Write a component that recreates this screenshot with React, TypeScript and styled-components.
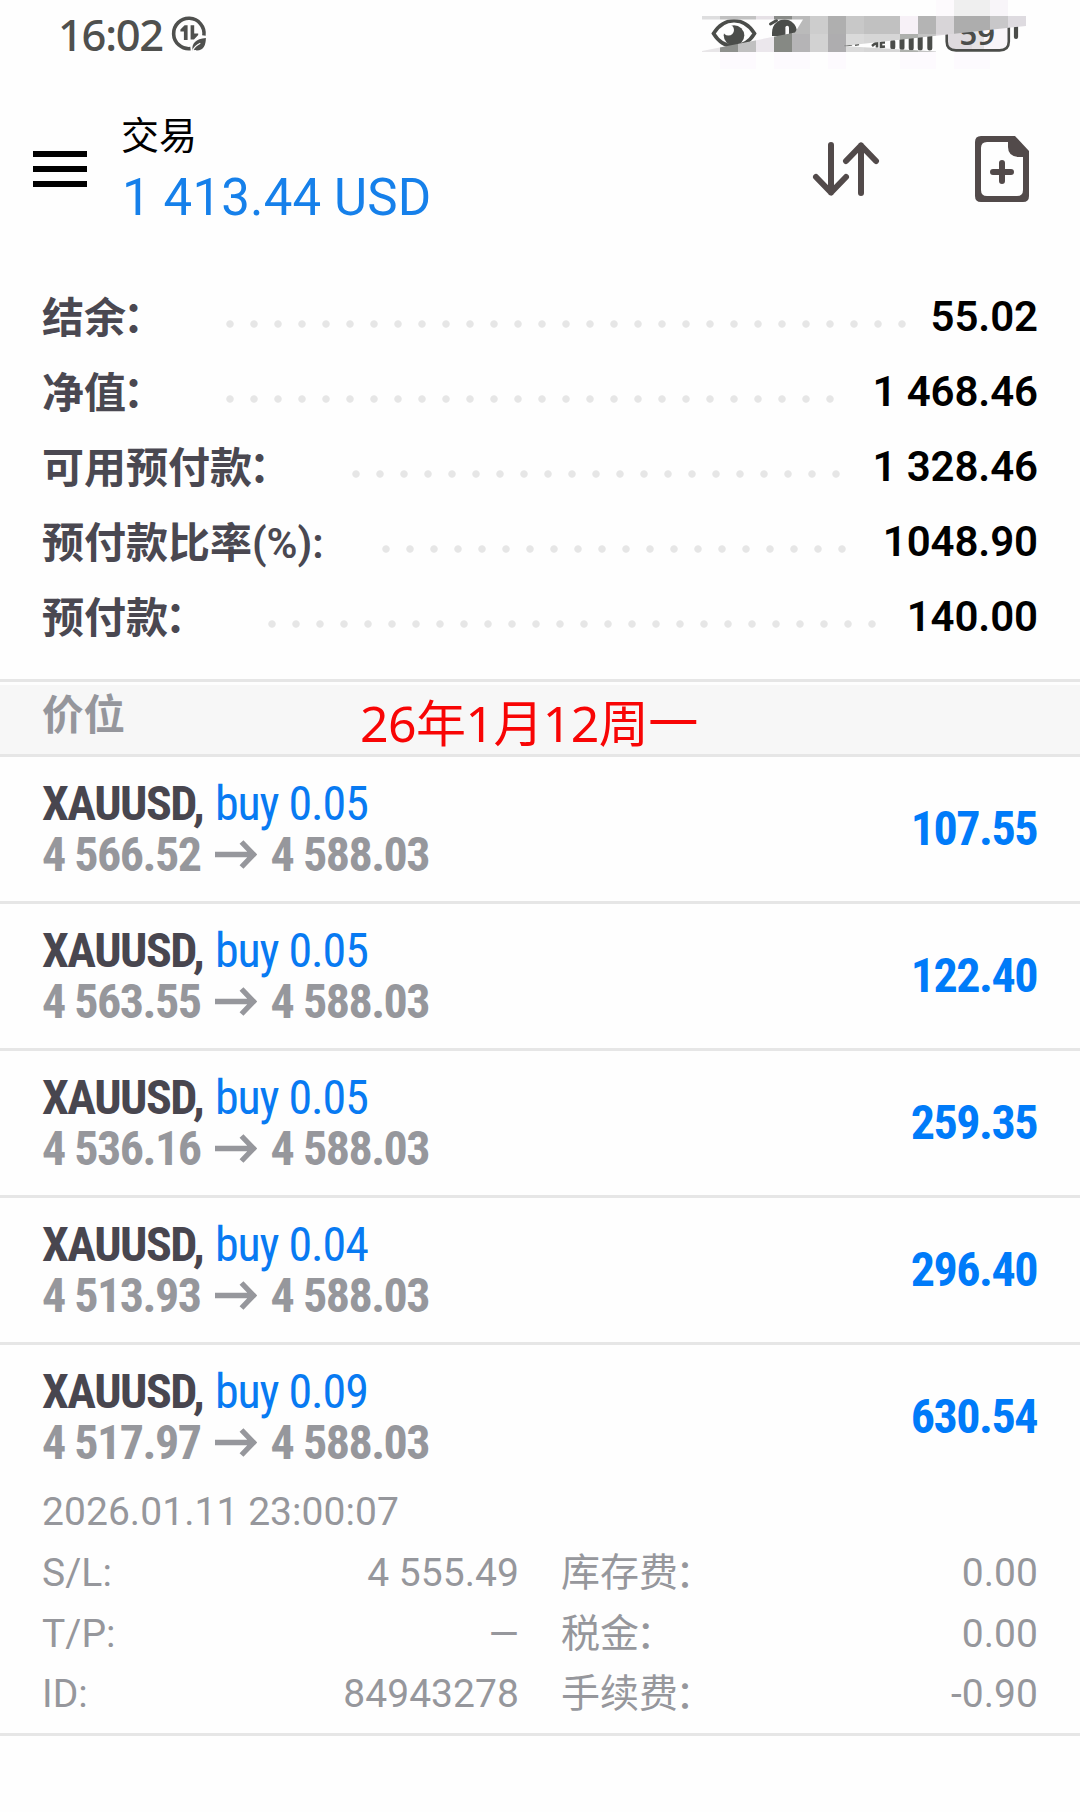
import React from 'react';
import styled, { createGlobalStyle } from 'styled-components';

const SANS = 'Roboto, "Noto Sans CJK SC", sans-serif';
const CONDENSED = '"Roboto Condensed", Roboto, "Noto Sans CJK SC", sans-serif';

const GlobalStyle = createGlobalStyle`
  * { box-sizing: border-box; }
  body {
    margin: 0;
    background: #fefefe;
    font-family: ${SANS};
  }
`;

const Screen = styled.div`
  width: 1080px;
  height: 1812px;
  display: flex;
  flex-direction: column;
  overflow: hidden;
  background: #fefefe;
`;

/* ---------- status bar ---------- */

const StatusBar = styled.div`
  height: 72px;
  padding: 0 54px 0 58px;
  display: flex;
  justify-content: space-between;
  flex: none;
`;

const ClockGroup = styled.div`
  display: flex;
  align-items: center;
  gap: 7px;
  height: 68px;
`;

const Clock = styled.span`
  width: 106px;
  padding-bottom: 1px;
  font: 500 43.5px/60px 'Noto Sans', sans-serif;
  letter-spacing: -1.3px;
  color: #4f504e;
  white-space: nowrap;
`;

/* ---------- header ---------- */

const Header = styled.header`
  height: 207px;
  padding: 30px 51px 0 33px;
  display: flex;
  flex: none;
`;

const MenuButton = styled.button`
  width: 54px;
  height: 36px;
  margin: 49px 34px 0 0;
  padding: 0;
  border: 0;
  background: none;
  display: flex;
  flex-direction: column;
  justify-content: space-between;
`;

const MenuBar = styled.span`
  width: 54px;
  height: 6px;
  background: #000;
`;

const Titles = styled.div`
  flex: 1;
  padding-top: 2px;
  display: flex;
  flex-direction: column;
`;

const Title = styled.h1`
  margin: 0;
  font-weight: 400;
  font-size: 38px;
  line-height: 64px;
  color: #000;
`;

const Equity = styled.div`
  padding-left: 1px;
  font-size: 51px;
  letter-spacing: 0.15px;
  line-height: 60px;
  color: #1680ea;
`;

const Actions = styled.div`
  display: flex;
  align-items: center;
  height: 66px;
  gap: 95px;
  margin-top: 34px;
`;

/* ---------- account summary ---------- */

const Summary = styled.section`
  padding: 0 42px 25px;
  flex: none;
`;

const SummaryRow = styled.div`
  height: 75px;
  display: flex;
  align-items: center;
  font-size: 42px;
`;

const SummaryLabel = styled.span`
  margin-right: 58px;
  padding-bottom: 5px;
  font-weight: 600;
  color: #4a4851;
  white-space: nowrap;
`;

/* full-width colon nudged against the glyph before it */
const WideColon = styled.span<{ $pull: number; $lift: number }>`
  display: inline-block;
  line-height: 1;
  margin: 0 ${(p) => p.$pull}px 0 ${(p) => -p.$pull}px;
  vertical-align: ${(p) => p.$lift}px;
`;

const Leader = styled.span<{ $dots: number }>`
  width: ${(p) => p.$dots * 24}px;
  height: 8px;
  margin: 14px auto 0 -8px;
  background: radial-gradient(circle at 12px 4px, #e6e6e6 3.3px, transparent 4.1px) 0 0 / 24px 8px repeat-x;
`;

const SummaryValue = styled.span`
  font-weight: 600;
  letter-spacing: -0.1px;
  color: #000;
  white-space: nowrap;
`;

/* ---------- positions ---------- */

const SectionBar = styled.div`
  height: 78px;
  flex: none;
  padding-top: 3px;
  border-top: 3px solid #e6e6e6;
  border-bottom: 3px solid #e6e6e6;
`;

const SectionFill = styled.div`
  height: 69px;
  padding-left: 42px;
  display: flex;
  background: #f7f7f7;
`;

const SectionTitle = styled.span`
  width: 318px;
  font-size: 41.5px;
  font-weight: 600;
  line-height: 62px;
  color: #95969c;
`;

const DateNote = styled.span`
  font: 400 50px/77px 'Noto Sans', 'Noto Sans CJK SC', sans-serif;
  letter-spacing: -0.6px;
  color: #f80505;
  white-space: nowrap;
`;

const Position = styled.article`
  flex: none;
  border-bottom: 3px solid #e6e6e6;
`;

const Deal = styled.div`
  height: 144px;
  padding: 0 42px;
  display: flex;
  align-items: center;
  justify-content: space-between;
  font-family: ${CONDENSED};
  font-size: 48px;
  font-weight: 700;
  letter-spacing: -1.5px;
  white-space: nowrap;
`;

const DealLines = styled.div`
  line-height: 51px;
`;

const Symbol = styled.div`
  color: #48464f;
`;

const Volume = styled.span`
  margin-left: 2px;
  font-weight: 400;
  letter-spacing: -1.1px;
  color: #087af2;
`;

const Prices = styled.div`
  display: flex;
  align-items: center;
  gap: 14px;
  color: #96979c;
`;

const Profit = styled.div`
  margin-right: 1px;
  padding-bottom: 2px;
  color: #007bf9;
`;

const Details = styled.div`
  margin-top: -7px;
  padding: 0 42px 8px;
  font-size: 39px;
  letter-spacing: 0.05px;
  line-height: 60.75px;
  color: #96979c;
`;

const DetailGrid = styled.div`
  display: grid;
  grid-template-columns: 1fr 1fr;
  column-gap: 42px;
`;

const DetailItem = styled.div`
  height: 60.75px;
  display: flex;
  justify-content: space-between;
`;

/* ---------- icons ---------- */

const DataSaverIcon = () => (
  <svg width="36" height="36" viewBox="171 16 36 36" fill="none">
    <path d="M203.9 35.5A15.2 15.2 0 1 0 190.5 48.6" stroke="#4f504e" strokeWidth="3.6" />
    <path d="M187.6 25.2V40H183.9V31.6H180.4V29.6L184.6 25.2Z" fill="#4f504e" />
    <path d="M190.6 25.2H194.2V33.6H198.2V35L194 39.6H190.6Z" fill="#4f504e" />
    <path d="M205.9 38C205.8 45.5 203.4 50.4 197 50.4C195.2 50.4 194.2 50 193.8 49.5L192.6 50.6C191.4 43.4 195.8 38.8 205.9 38Z" fill="#4f504e" />
    <path d="M192.6 50.6C194 47.5 196.5 45 200.3 43.2" stroke="#fefefe" strokeWidth="1.2" />
  </svg>
);

const CELL = 18;
const MOSAIC: string[][] = [
  ['#dededf', '#c0c0c0', '#c2c2c2', '#e6e1e6', '#8a8c89', '#bababa', '#cdcdcd', '#afafaf', '#c8c8c8', '#c1c1c1', '#c1c1c1', '#f7f1f7', '#b4b4b4', '#d8d5d8', '#adadad', '#adadad', '#c8c7c9', '#dedbe0'],
  ['#e8e6e8', '#8e908d', '#c0c0c0', '#ebe7ec', '#868984', '#b5b4b6', '#d2d2d2', '#aeadaf', '#dadada', '#d6d6d6', '#d6d6d6', '#aeb0ad', '#c4c4c4', '#dedade', '#e0e0e0', '#e0e0e0', '#f5f2f5', '#f5f2f5'],
];
const HAZE = [
  [720, 36], [774, 36], [828, 18], [900, 36], [954, 36],
];

const StatusIcons = () => (
  <svg width="326" height="72" viewBox="700 0 326 72" fill="none">
    <defs>
      <clipPath id="mosaic">
        <path d="M702 16H1026V26L843 46L936 51.5V52H702V51L795 32.5L803 19.5H702Z" />
      </clipPath>
    </defs>
    <path d="M936 0h18v16h-18z" fill="#fdfafd" />
    <path d="M954 0h36v16h-36z" fill="#efefef" />
    <path d="M990 0h18v16h-18z" fill="#f8f5f9" />
    {HAZE.map(([x, w]) => (
      <rect key={x} x={x} y="52" width={w} height="17" fill="#fdfafe" />
    ))}

    <path d="M713.5 33.5C724 16.5 744 16.5 754.5 33.5C744 50.5 724 50.5 713.5 33.5Z" stroke="#4b4d4a" strokeWidth="3.6" />
    <circle cx="734" cy="35.5" r="10.3" fill="#4b4d4a" />
    <circle cx="728.4" cy="30" r="5.6" fill="#fefefe" />

    <path d="M772 36V33C772 15 797 15 797 33V36Z" fill="#4b4d4a" />
    <path d="M770.5 24L776.5 20.5" stroke="#4b4d4a" strokeWidth="3" strokeLinecap="round" />
    <path d="M787.2 27.5V35" stroke="#fefefe" strokeWidth="3.6" strokeLinecap="round" />

    <path d="M844 46L852 44.5M855 45L859 44.3" stroke="#4b4d4a" strokeWidth="2" />
    <path d="M872 46L877 42V47.5M881 42V47L885 46.5M881 42.5H885" stroke="#4b4d4a" strokeWidth="2.6" />
    <path d="M892.8 42V47M902 30V47.5M911.2 30V48M920.2 30V48M929.8 30V48" stroke="#4b4d4a" strokeWidth="5" strokeLinecap="round" />

    <path d="M947 18H972V50H956Q947 50 947 41Z" fill="#dedade" />
    <path d="M972 18H984V50H972Z" fill="#e4e2e4" />
    <path d="M984 18H1009V41Q1009 50 1000 50H984Z" fill="#f8f5f9" />
    <path d="M946.7 18V41.5Q946.7 50.4 956 50.4H999.5Q1008.8 50.4 1008.8 41.5V18" stroke="#4b4d4a" strokeWidth="2.6" />
    <path d="M1016 22V37" stroke="#4b4d4a" strokeWidth="4.2" strokeLinecap="round" />
    <text x="959.5" y="45" fontFamily="'Noto Sans', sans-serif" fontWeight="600" fontSize="31" fill="#4b4d4a">59</text>

    <g clipPath="url(#mosaic)">
      {MOSAIC.map((row, r) =>
        row.map((fill, c) => (
          <rect key={`${r}-${c}`} x={702 + c * CELL} y={16 + r * CELL} width={CELL} height={CELL} fill={fill} />
        )),
      )}
    </g>
  </svg>
);

const SortIcon = () => (
  <svg width="68" height="60" viewBox="812 139 68 60" fill="none" stroke="#524a4a" strokeWidth="6" strokeLinecap="round" strokeLinejoin="round">
    <path d="M831 145V192.5M816 177L831 192.5L846 177" />
    <path d="M861 193V145.5M846 161L861 145.5L876 161" />
  </svg>
);

const NewOrderIcon = () => (
  <svg width="54" height="66" viewBox="975 136 54 66">
    <path
      fill="#524a4a"
      fillRule="evenodd"
      d="M981 136H1015L1029 151V196Q1029 202 1023 202H981Q975 202 975 196V142Q975 136 981 136ZM987 142Q981 142 981 148V190Q981 196 987 196H1017Q1023 196 1023 190V157H1018Q1008 156 1008 147V142Z"
    />
    <path d="M993 172H1011M1002 163V181" stroke="#524a4a" strokeWidth="6" strokeLinecap="round" />
  </svg>
);

const ArrowIcon = () => (
  <svg width="42" height="30" viewBox="0 0 42 30" fill="none" stroke="#96979c" strokeWidth="5.4">
    <path d="M0 14.5H38M26.5 2L38.5 14.5L26.5 27" />
  </svg>
);

/* ---------- data ---------- */

const summary = [
  { label: '结余', wide: true, value: '55.02', dots: 29 },
  { label: '净值', wide: true, value: '1 468.46', dots: 26 },
  { label: '可用预付款', wide: true, value: '1 328.46', dots: 21 },
  { label: '预付款比率(%):', wide: false, value: '1048.90', dots: 20 },
  { label: '预付款', wide: true, value: '140.00', dots: 26 },
];

const positions = [
  { volume: '0.05', open: '4 566.52', profit: '107.55' },
  { volume: '0.05', open: '4 563.55', profit: '122.40' },
  { volume: '0.05', open: '4 536.16', profit: '259.35' },
  { volume: '0.04', open: '4 513.93', profit: '296.40' },
  { volume: '0.09', open: '4 517.97', profit: '630.54', expanded: true },
];

const details = [
  { label: 'S/L:', wide: false, value: '4 555.49' },
  { label: '库存费', wide: true, value: '0.00' },
  { label: 'T/P:', wide: false, value: '—' },
  { label: '税金', wide: true, value: '0.00' },
  { label: 'ID:', wide: false, value: '84943278' },
  { label: '手续费', wide: true, value: '-0.90' },
];

export default function App() {
  return (
    <Screen lang="zh-CN">
      <GlobalStyle />
      <StatusBar>
        <ClockGroup>
          <Clock>16:02</Clock>
          <DataSaverIcon />
        </ClockGroup>
        <StatusIcons />
      </StatusBar>

      <Header>
        <MenuButton aria-label="menu">
          <MenuBar />
          <MenuBar />
          <MenuBar />
        </MenuButton>
        <Titles>
          <Title>交易</Title>
          <Equity>1 413.44 USD</Equity>
        </Titles>
        <Actions>
          <SortIcon />
          <NewOrderIcon />
        </Actions>
      </Header>

      <Summary>
        {summary.map((row) => (
          <SummaryRow key={row.label}>
            <SummaryLabel>
              {row.label}
              {row.wide && <WideColon $pull={3} $lift={1}>：</WideColon>}
            </SummaryLabel>
            <Leader $dots={row.dots} />
            <SummaryValue>{row.value}</SummaryValue>
          </SummaryRow>
        ))}
      </Summary>

      <SectionBar>
        <SectionFill>
          <SectionTitle>价位</SectionTitle>
          <DateNote>26年1月12周一</DateNote>
        </SectionFill>
      </SectionBar>

      {positions.map((p) => (
        <Position key={p.open}>
          <Deal>
            <DealLines>
              <Symbol>
                XAUUSD, <Volume>buy {p.volume}</Volume>
              </Symbol>
              <Prices>
                <span>{p.open}</span>
                <ArrowIcon />
                <span>4 588.03</span>
              </Prices>
            </DealLines>
            <Profit>{p.profit}</Profit>
          </Deal>
          {p.expanded && (
            <Details>
              <div>2026.01.11 23:00:07</div>
              <DetailGrid>
                {details.map((d) => (
                  <DetailItem key={d.label}>
                    <span>
                      {d.label}
                      {d.wide && <WideColon $pull={3} $lift={-1}>：</WideColon>}
                    </span>
                    <span>{d.value}</span>
                  </DetailItem>
                ))}
              </DetailGrid>
            </Details>
          )}
        </Position>
      ))}
    </Screen>
  );
}
